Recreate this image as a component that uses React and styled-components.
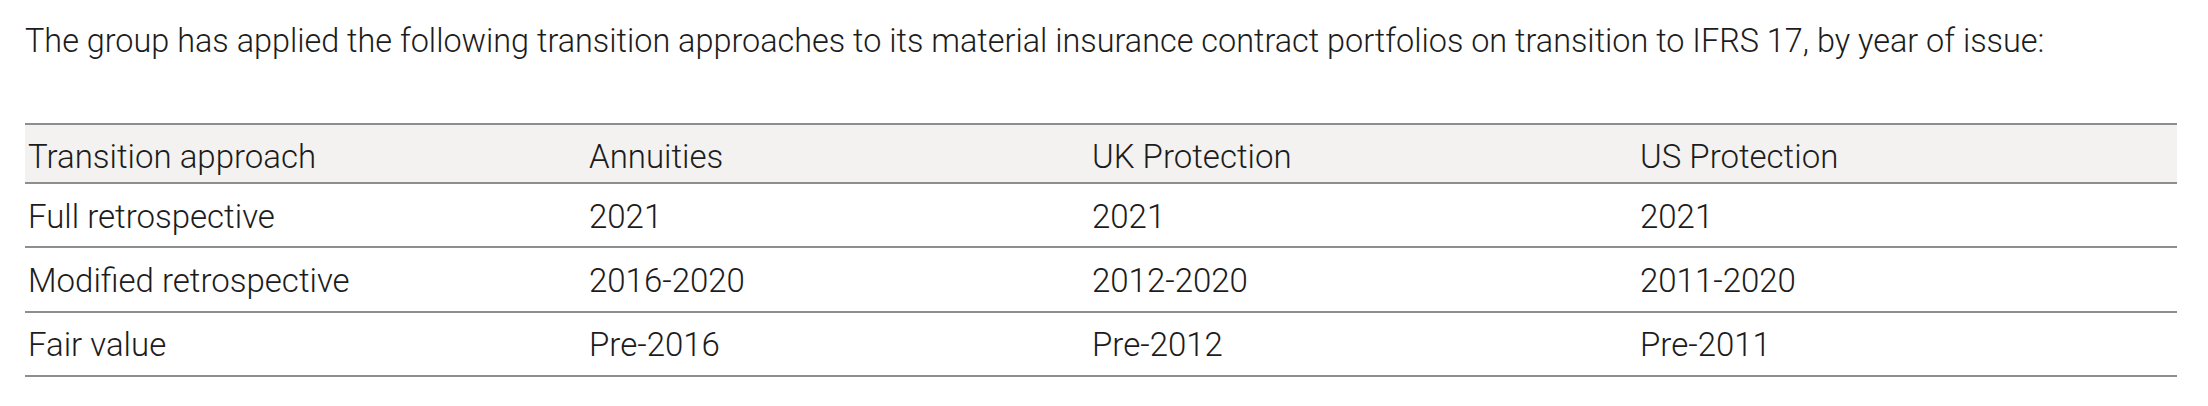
import styled, { createGlobalStyle } from 'styled-components';

const GlobalStyle = createGlobalStyle`
  html, body {
    margin: 0;
    padding: 0;
    background: #fff;
  }
  body {
    font-family: Roboto, "Liberation Sans", Arial, sans-serif;
    font-weight: 300;
    color: #1c1c1c;
  }
`;

const columns = ['Transition approach', 'Annuities', 'UK Protection', 'US Protection'];

const rows = [
  ['Full retrospective', '2021', '2021', '2021'],
  ['Modified retrospective', '2016-2020', '2012-2020', '2011-2020'],
  ['Fair value', 'Pre-2016', 'Pre-2012', 'Pre-2011'],
];

export default function App() {
  return (
    <>
      <GlobalStyle />
      <Page>
        <Intro>
          The group has applied the following transition approaches to its material insurance contract portfolios on transition to IFRS 17, by year of issue:
        </Intro>
        <Table>
          <HeadRow>
            {columns.map(c => (
              <Cell key={c}>{c}</Cell>
            ))}
          </HeadRow>
          {rows.map(r => (
            <Row key={r[0]}>
              {r.map((v, i) => (
                <Cell key={i}>{v}</Cell>
              ))}
            </Row>
          ))}
        </Table>
      </Page>
    </>
  );
}

const Page = styled.div`
  padding: 22px 31px 0 25px;
  display: flex;
  flex-direction: column;
`;

const Intro = styled.p`
  margin: 0 0 63px 0;
  font-size: 32.4px;
  line-height: normal;
  white-space: nowrap;
`;

const Table = styled.div`
  width: 2152px;
  display: flex;
  flex-direction: column;
  border-top: 2px solid #8e8e8e;
`;

const Row = styled.div`
  display: grid;
  grid-template-columns: 561px 503px 548px 540px;
  align-items: center;
  box-sizing: border-box;
  height: 64.33px;
  padding-top: 2px;
  border-bottom: 2px solid #8e8e8e;
  font-size: 33px;
`;

const HeadRow = styled(Row)`
  background: #f3f2f0;
  padding-top: 5px;
  height: 59px;
`;

const Cell = styled.div`
  padding-left: 3px;
  line-height: normal;
  white-space: nowrap;
`;
